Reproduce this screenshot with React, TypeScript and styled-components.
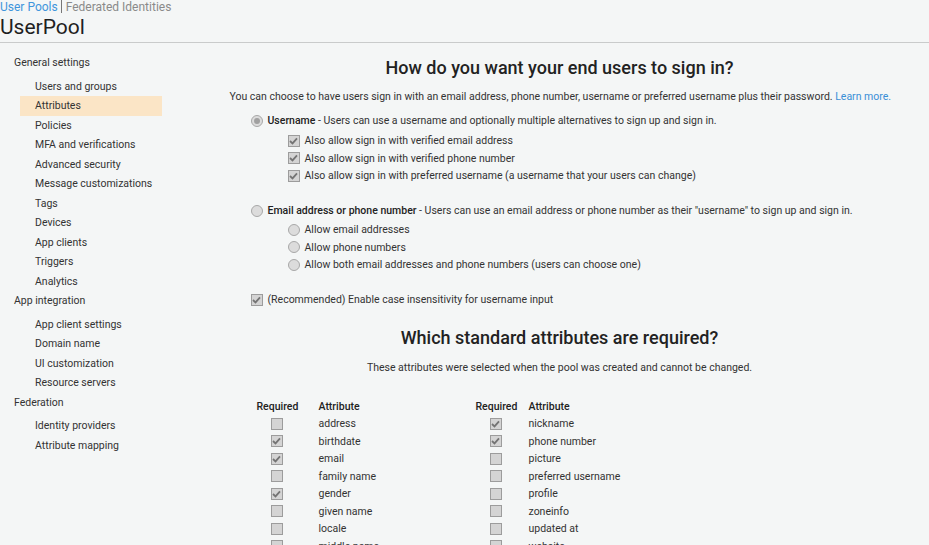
import React from 'react'
import styled, { createGlobalStyle } from 'styled-components'

const GlobalStyle = createGlobalStyle`
    body {
        margin: 0;
        background: #f4f6f6;
        font-family: Roboto, 'Liberation Sans', Arial, sans-serif;
        color: #333;
        overflow: hidden;
    }
`

const Page = styled.div`
    width: 929px;
    height: 545px;
    overflow: hidden;
`

const Header = styled.header`
    border-bottom: 1px solid #c9cbcb;
`

const Breadcrumb = styled.div`
    font-size: 12px;
    line-height: 12px;
    height: 12px;
    color: #8a8a8a;
    white-space: nowrap;
`

const CrumbLink = styled.span`
    color: #3f95dc;
`

const CrumbDivider = styled.span`
    display: inline-block;
    width: 1px;
    height: 13px;
    background: #777;
    margin: 0 4px 0 3px;
    vertical-align: -2px;
`

const Title = styled.h1`
    margin: 0;
    font-size: 21px;
    font-weight: 400;
    line-height: 30px;
    color: #1f1f1f;
`

const Body = styled.div`
    display: flex;
`

const Sidebar = styled.nav`
    width: 190px;
    flex: none;
    padding-top: 10px;
    font-size: 10.5px;
`

const GroupLabel = styled.div`
    line-height: 19.5px;
    padding-left: 14px;
    margin-bottom: 4px;
    color: #333;
`

const NavItem = styled.div<{ $active?: boolean }>`
    line-height: 19.5px;
    height: 19.5px;
    margin-left: 20px;
    width: 142px;
    padding-left: 15px;
    box-sizing: border-box;
    color: #333;
    background: ${(p) => (p.$active ? '#fbe5c6' : 'transparent')};
`

const Main = styled.main`
    flex: 1;
    padding-top: 13px;
`

const Section = styled.section`
    width: 660px;
    margin: 0 auto;
    font-size: 10.5px;
`

const Heading = styled.h2<{ $top?: number }>`
    margin: ${(p) => p.$top ?? 0}px 0 0;
    font-size: 18px;
    font-weight: 500;
    line-height: 24px;
    text-align: center;
    color: #222;
`

const Lead = styled.p<{ $top: number }>`
    margin: ${(p) => p.$top}px 0 0;
    line-height: 16px;
    text-align: center;
    white-space: nowrap;
`

const Link = styled.span`
    color: #3a8fd6;
`

const OptionList = styled.div<{ $top: number; $indent: number }>`
    margin-top: ${(p) => p.$top}px;
    padding-left: ${(p) => p.$indent}px;
`

const OptionRow = styled.div`
    display: flex;
    align-items: center;
    height: 17.5px;
    gap: 5px;
    white-space: nowrap;
`

const Strong = styled.b`
    font-weight: 500;
    color: #222;
`

const Box = styled.span`
    display: inline-flex;
    align-items: center;
    justify-content: center;
    width: 12px;
    height: 12px;
    box-sizing: border-box;
    border: 1px solid #9c9c9c;
    background: #d4d4d4;
    flex: none;
`

const Circle = styled.span<{ $on?: boolean }>`
    display: inline-flex;
    align-items: center;
    justify-content: center;
    width: 12px;
    height: 12px;
    box-sizing: border-box;
    border-radius: 50%;
    border: 1px solid #a8a8a8;
    background: #dcdcdc;
    flex: none;

    &::after {
        content: '';
        display: ${(p) => (p.$on ? 'block' : 'none')};
        width: 6px;
        height: 6px;
        border-radius: 50%;
        background: #a0a0a0;
    }
`

const Check = ({ on }: { on?: boolean }) => (
    <Box>
        {on && (
            <svg width="9" height="8" viewBox="0 0 9 8">
                <path d="M1 4 L3.5 6.4 L8 1.3" fill="none" stroke="#747474" strokeWidth="1.8" />
            </svg>
        )}
    </Box>
)

const AttrGrid = styled.div`
    display: grid;
    grid-template-columns: 62px 157px 53px 1fr;
    margin: 22px 0 0 27px;
    grid-auto-rows: 17.5px;
    align-items: center;
`

const HeadCell = styled.div`
    font-weight: 500;
    color: #222;
`

const CheckCell = styled.div`
    width: 40px;
    display: flex;
    justify-content: center;
`

const AttrCell = styled.div`
    color: #333;
`

const general = [
    'Users and groups',
    'Attributes',
    'Policies',
    'MFA and verifications',
    'Advanced security',
    'Message customizations',
    'Tags',
    'Devices',
    'App clients',
    'Triggers',
    'Analytics',
]
const integration = ['App client settings', 'Domain name', 'UI customization', 'Resource servers']
const federation = ['Identity providers', 'Attribute mapping']

const leftAttrs: [string, boolean][] = [
    ['address', false],
    ['birthdate', true],
    ['email', true],
    ['family name', false],
    ['gender', true],
    ['given name', false],
    ['locale', false],
    ['middle name', false],
]
const rightAttrs: [string, boolean][] = [
    ['nickname', true],
    ['phone number', true],
    ['picture', false],
    ['preferred username', false],
    ['profile', false],
    ['zoneinfo', false],
    ['updated at', false],
    ['website', false],
]

const App = () => {
    return (
        <Page>
            <GlobalStyle />
            <Header>
                <Breadcrumb>
                    <CrumbLink>User Pools</CrumbLink>
                    <CrumbDivider />
                    Federated Identities
                </Breadcrumb>
                <Title>UserPool</Title>
            </Header>
            <Body>
                <Sidebar>
                    <GroupLabel>General settings</GroupLabel>
                    {general.map((item) => (
                        <NavItem key={item} $active={item === 'Attributes'}>
                            {item}
                        </NavItem>
                    ))}
                    <GroupLabel>App integration</GroupLabel>
                    {integration.map((item) => (
                        <NavItem key={item}>{item}</NavItem>
                    ))}
                    <GroupLabel>Federation</GroupLabel>
                    {federation.map((item) => (
                        <NavItem key={item}>{item}</NavItem>
                    ))}
                </Sidebar>
                <Main>
                    <Section>
                        <Heading>How do you want your end users to sign in?</Heading>
                        <Lead $top={9}>
                            You can choose to have users sign in with an email address, phone number,
                            username or preferred username plus their password. <Link>Learn more.</Link>
                        </Lead>

                        <OptionList $top={7} $indent={21}>
                            <OptionRow>
                                <Circle $on />
                                <span>
                                    <Strong>Username</Strong> - Users can use a username and optionally
                                    multiple alternatives to sign up and sign in.
                                </span>
                            </OptionRow>
                        </OptionList>
                        <OptionList $top={2.5} $indent={58}>
                            <OptionRow>
                                <Check on />
                                Also allow sign in with verified email address
                            </OptionRow>
                            <OptionRow>
                                <Check on />
                                Also allow sign in with verified phone number
                            </OptionRow>
                            <OptionRow>
                                <Check on />
                                Also allow sign in with preferred username (a username that your users
                                can change)
                            </OptionRow>
                        </OptionList>

                        <OptionList $top={17.5} $indent={21}>
                            <OptionRow>
                                <Circle />
                                <span>
                                    <Strong>Email address or phone number</Strong> - Users can use an
                                    email address or phone number as their "username" to sign up and
                                    sign in.
                                </span>
                            </OptionRow>
                        </OptionList>
                        <OptionList $top={1.5} $indent={58}>
                            <OptionRow>
                                <Circle />
                                Allow email addresses
                            </OptionRow>
                            <OptionRow>
                                <Circle />
                                Allow phone numbers
                            </OptionRow>
                            <OptionRow>
                                <Circle />
                                Allow both email addresses and phone numbers (users can choose one)
                            </OptionRow>
                        </OptionList>

                        <OptionList $top={17.5} $indent={21}>
                            <OptionRow>
                                <Check on />
                                (Recommended) Enable case insensitivity for username input
                            </OptionRow>
                        </OptionList>

                        <Heading $top={17}>Which standard attributes are required?</Heading>
                        <Lead $top={10}>
                            These attributes were selected when the pool was created and cannot be
                            changed.
                        </Lead>

                        <AttrGrid>
                            <HeadCell>Required</HeadCell>
                            <HeadCell>Attribute</HeadCell>
                            <HeadCell>Required</HeadCell>
                            <HeadCell>Attribute</HeadCell>
                            {leftAttrs.map(([name, on], i) => (
                                <React.Fragment key={name}>
                                    <CheckCell>
                                        <Check on={on} />
                                    </CheckCell>
                                    <AttrCell>{name}</AttrCell>
                                    <CheckCell>
                                        <Check on={rightAttrs[i][1]} />
                                    </CheckCell>
                                    <AttrCell>{rightAttrs[i][0]}</AttrCell>
                                </React.Fragment>
                            ))}
                        </AttrGrid>
                    </Section>
                </Main>
            </Body>
        </Page>
    )
}

export default App
